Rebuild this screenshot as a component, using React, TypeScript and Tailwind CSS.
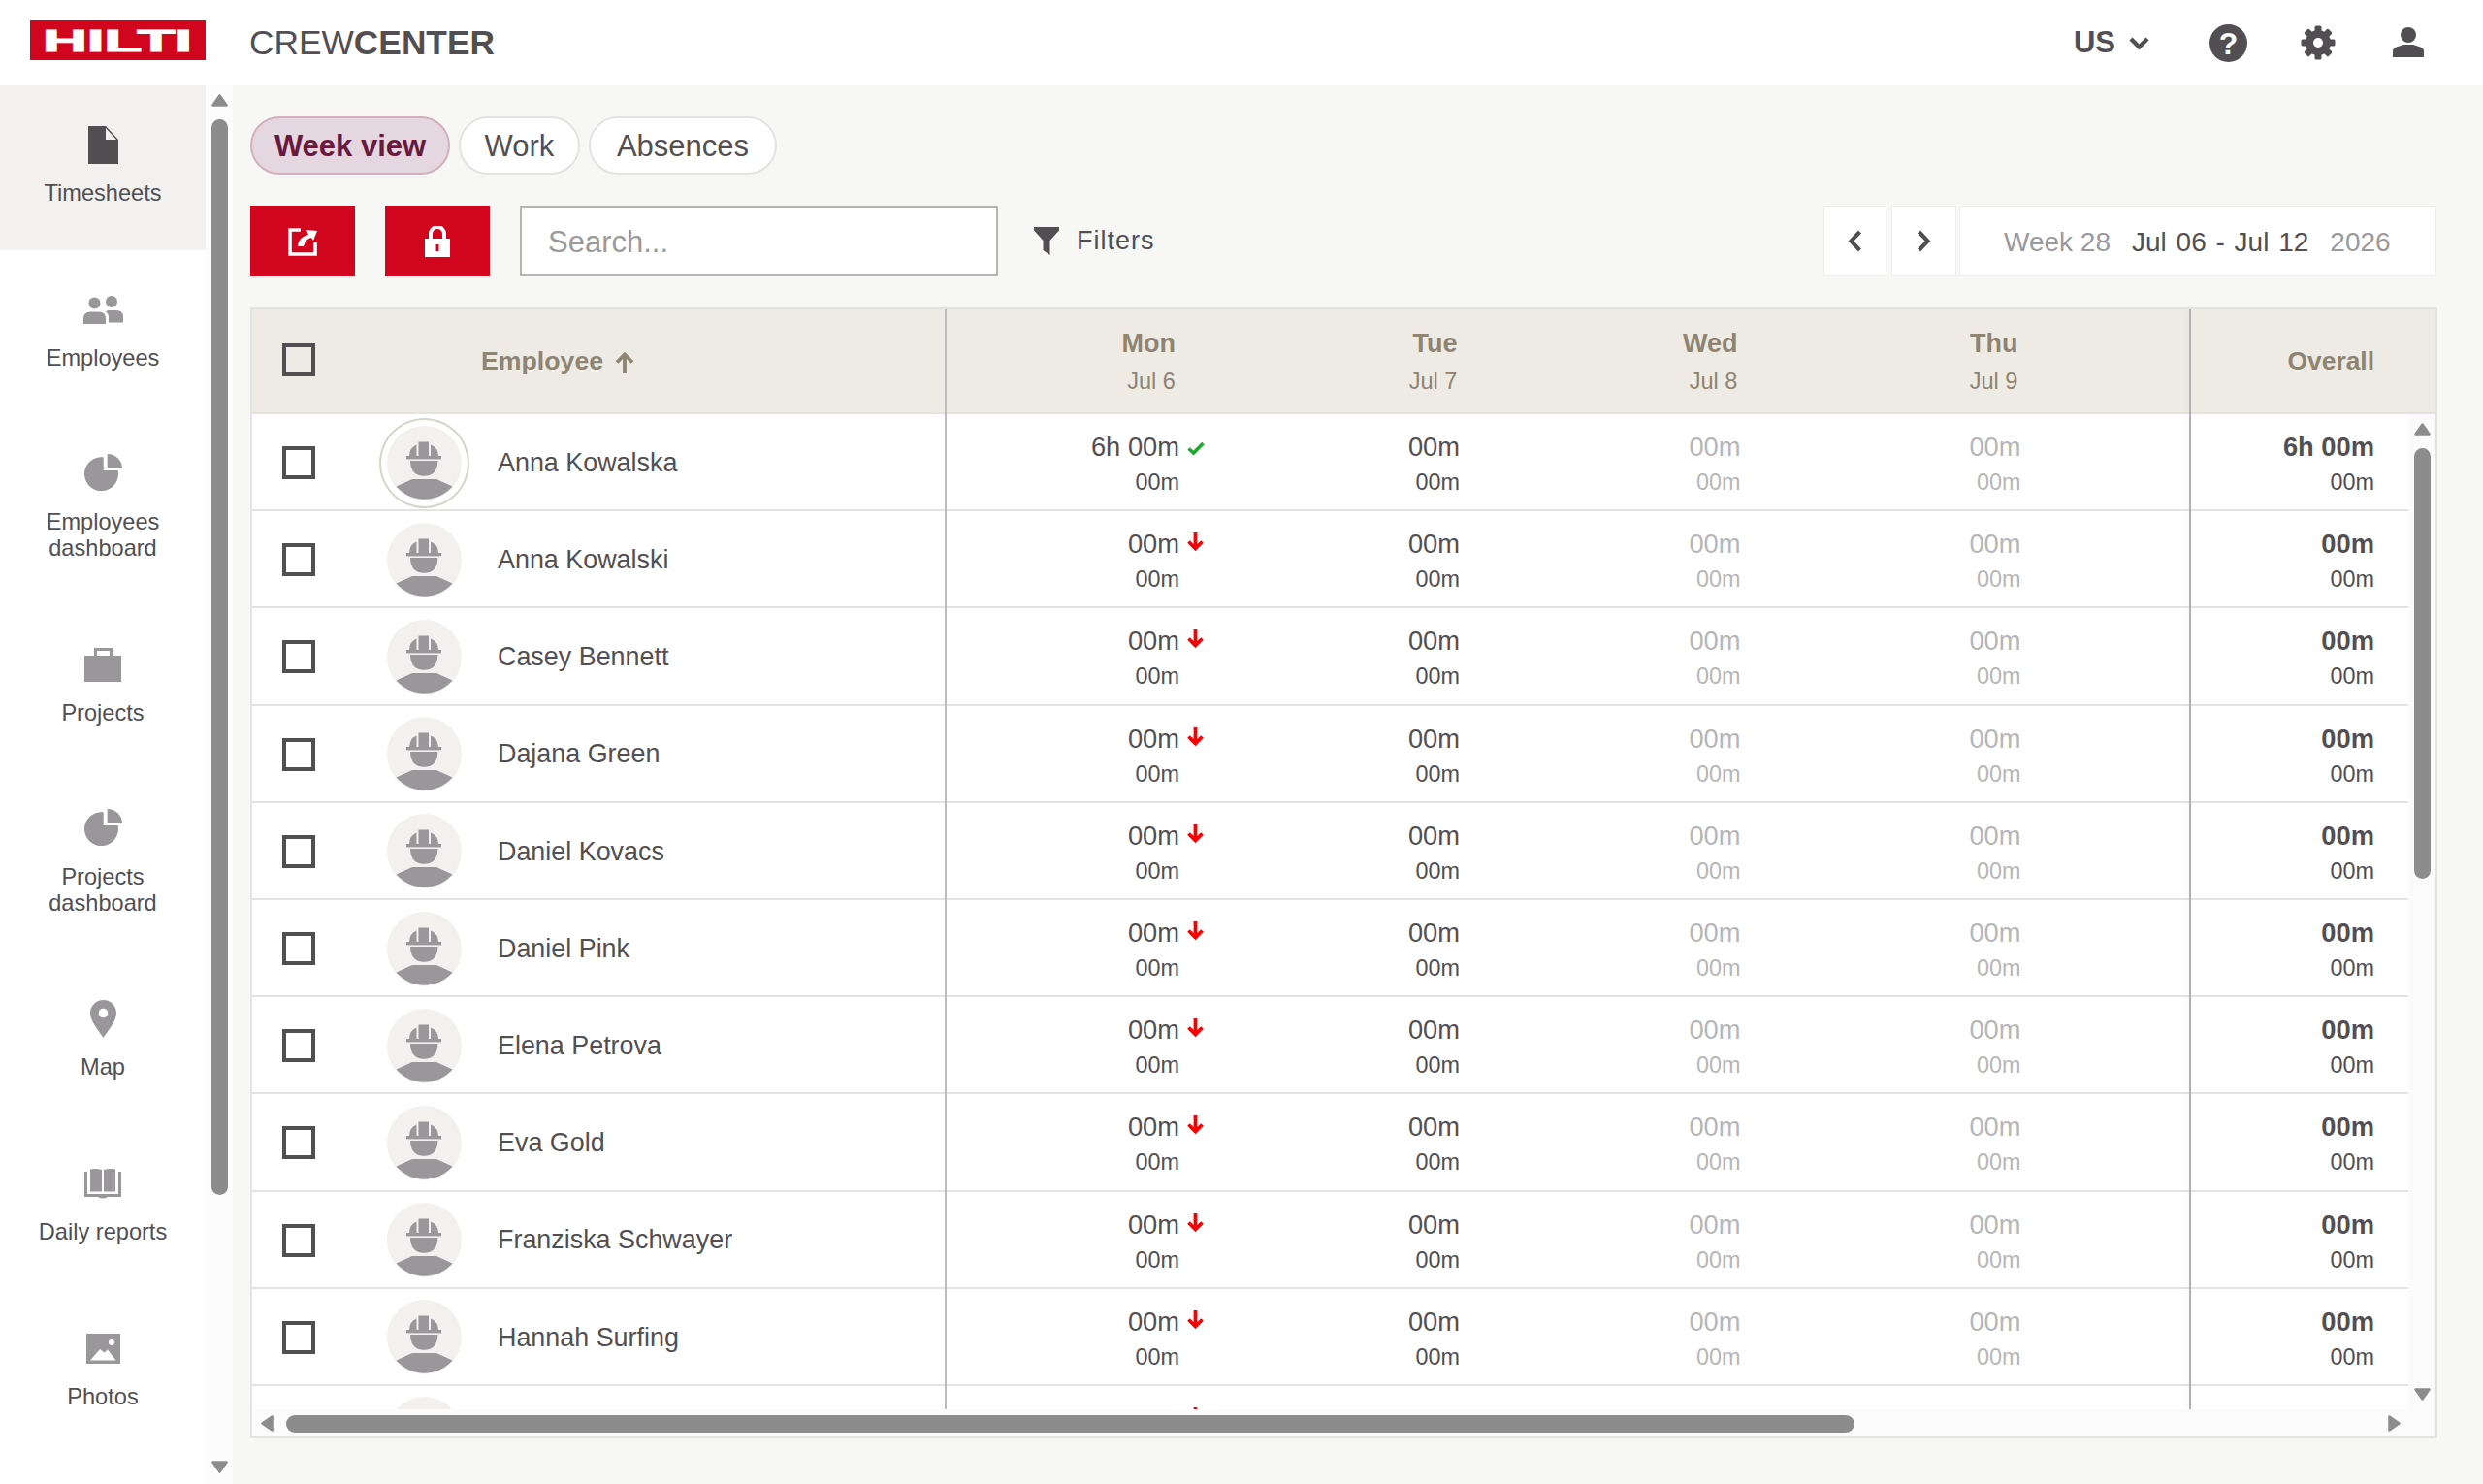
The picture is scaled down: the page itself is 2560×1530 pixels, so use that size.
import React from "react";

const DARK = "#524f53";
const GREY = "#99979a";
const SB = "#8c8c8c";

function DocIcon() {
  return (
    <svg width="31" height="39" viewBox="0 0 31 39">
      <path d="M0 0H18L31 14V39H0Z" fill={DARK} />
      <path d="M18 2L29 14H18Z" fill="#f2f1f0" />
    </svg>
  );
}
function PeopleIcon() {
  return (
    <svg width="41" height="29" viewBox="0 0 41 29" fill={GREY}>
      <circle cx="11.5" cy="7.5" r="6" />
      <circle cx="29" cy="6" r="6" />
      <path d="M0 29V23Q0 17 7 16.5H16Q23 17 23 23V29Z" />
      <path d="M25 15H34Q41 15.5 41 21V27.5H26V22Q26 18 23 16.5Z" />
    </svg>
  );
}
function PieIcon() {
  return (
    <svg className="mt-[-3px]" width="39" height="38" viewBox="0 0 39 38" fill={GREY}>
      <path d="M19.7 3.3V17H34.6A17.5 17.5 0 1 1 19.7 3.3Z" />
      <path d="M23.7 0A15.3 15.3 0 0 1 39 15H23.7Z" />
    </svg>
  );
}
function CaseIcon() {
  return (
    <svg width="38" height="35" viewBox="0 0 38 35" fill={GREY}>
      <path d="M0 8H38V35H0Z" />
      <path d="M10 8V0H29V8H26V3H13V8Z" />
    </svg>
  );
}
function PinIcon() {
  return (
    <svg width="27" height="39" viewBox="0 0 27 39">
      <path d="M13.5 0C6 0 0 6 0 13.5C0 22 9 32 13.5 39C18 32 27 22 27 13.5C27 6 21 0 13.5 0Z" fill={GREY} />
      <circle cx="13.5" cy="13.5" r="4.8" fill="#fff" />
    </svg>
  );
}
function BookIcon() {
  return (
    <svg width="38" height="32" viewBox="0 0 38 32" fill={GREY}>
      <path d="M6 0.5Q12 -0.5 18 1V23.5H6Z" />
      <path d="M20 1Q26 -0.5 32 0.5V23.5H20Z" />
      <path d="M0 3H3V26H35V3H38V29H24Q19 32 14 29H0Z" />
    </svg>
  );
}
function PhotoIcon() {
  return (
    <svg width="35" height="31" viewBox="0 0 35 31">
      <rect width="35" height="31" fill={GREY} />
      <circle cx="26" cy="9" r="3" fill="#fff" />
      <path d="M4 27.5L14 16L18.5 19.5L22 16.5L30.5 27.5Z" fill="#fff" />
    </svg>
  );
}

function ArrowUp() {
  return (
    <svg width="17" height="13" viewBox="0 0 17 13" className="shrink-0">
      <path d="M8.5 1.5L15.5 11.5H1.5Z" fill={SB} stroke={SB} strokeWidth="2.5" strokeLinejoin="round" />
    </svg>
  );
}
function ArrowDown() {
  return (
    <svg width="17" height="13" viewBox="0 0 17 13" className="shrink-0">
      <path d="M8.5 11.5L15.5 1.5H1.5Z" fill={SB} stroke={SB} strokeWidth="2.5" strokeLinejoin="round" />
    </svg>
  );
}
function ArrowLeft() {
  return (
    <svg width="13" height="17" viewBox="0 0 13 17" className="shrink-0">
      <path d="M1.5 8.5L11.5 15.5V1.5Z" fill={SB} stroke={SB} strokeWidth="2.5" strokeLinejoin="round" />
    </svg>
  );
}
function ArrowRight() {
  return (
    <svg width="13" height="17" viewBox="0 0 13 17" className="shrink-0">
      <path d="M11.5 8.5L1.5 15.5V1.5Z" fill={SB} stroke={SB} strokeWidth="2.5" strokeLinejoin="round" />
    </svg>
  );
}

function NavItem({ icon, label, active }: { icon: React.ReactNode; label: React.ReactNode; active?: boolean }) {
  return (
    <div className={`flex flex-col items-center pt-[39.5px] pb-[45.2px] ${active ? "bg-[#f2f1f0]" : ""}`}>
      <div className="flex h-[44px] items-center justify-center">{icon}</div>
      <div className="mt-[14.5px] text-center text-[23.6px] leading-[26.5px] text-[#524f53]">{label}</div>
    </div>
  );
}

function Checkbox() {
  return <div className="h-[34px] w-[34px] shrink-0 border-4 border-[#524f53] bg-transparent" />;
}

function Avatar({ ring, id }: { ring?: boolean; id: number }) {
  return (
    <div
      className={`h-[77px] w-[77px] shrink-0 rounded-full bg-[#f2f1f0] ${
        ring ? "shadow-[0_0_0_6px_#ffffff,0_0_0_8px_#d7d5cc]" : ""
      }`}
    >
      <svg width="77" height="77" viewBox="0 0 77 77" fill={GREY} data-id={id}>
        <path d="M23 31Q23.5 22 30.5 19.5V31Z" />
        <path d="M32.5 16.5H43V31H32.5Z" />
        <path d="M45 19.5Q52.5 22 53 31H45Z" />
        <rect x="20" y="31" width="36" height="3.4" />
        <path d="M24 36H52.4Q52 51.7 38.2 51.7Q24.4 51.7 24 36Z" />
        <path d="M9.5 62.5L26 55H51L67.5 62.5A38.5 38.5 0 0 1 9.5 62.5Z" />
      </svg>
    </div>
  );
}

function Cell({ main, sub, muted, badge }: { main: string; sub: string; muted?: boolean; badge?: "ok" | "down" }) {
  return (
    <div className={`flex flex-col items-end pt-[16px] ${muted ? "text-[#b7b6b7]" : "text-[#524f53]"}`}>
      <div className="relative text-[27.3px] leading-[36px]">
        {main}
        {badge === "ok" && (
          <svg className="absolute left-[100%] top-[12px] ml-[8px]" width="18" height="14" viewBox="0 0 18 14">
            <path d="M1.5 7.5L6.5 12L16.5 2" fill="none" stroke="#19ab2b" strokeWidth="3.6" />
          </svg>
        )}
        {badge === "down" && (
          <svg className="absolute left-[100%] top-[6px] ml-[8px]" width="17" height="19" viewBox="0 0 17 19">
            <path d="M8.5 0V16M1.5 9.5L8.5 16.5L15.5 9.5" fill="none" stroke="#fb0000" strokeWidth="3.8" />
          </svg>
        )}
      </div>
      <div className="text-[23.4px] leading-[36px]">{sub}</div>
    </div>
  );
}

const names = [
  "Anna Kowalska",
  "Anna Kowalski",
  "Casey Bennett",
  "Dajana Green",
  "Daniel Kovacs",
  "Daniel Pink",
  "Elena Petrova",
  "Eva Gold",
  "Franziska Schwayer",
  "Hannah Surfing",
  "Jan Novak",
];

function Row({ name, index }: { name: string; index: number }) {
  const first = index === 0;
  return (
    <div className="flex h-[100.2px] shrink-0 border-b-2 border-[#e3e3e3]">
      <div className="flex w-[716px] shrink-0 items-center pl-[31px] pt-[2px]">
        <Checkbox />
        <div className="ml-[74px]">
          <Avatar ring={first} id={index} />
        </div>
        <div className="ml-[37px] text-[26.9px] text-[#524f53]">{name}</div>
      </div>
      <div className="grid w-[1283px] shrink-0 grid-cols-[240px_289px_289.5px_289px]">
        <Cell main={first ? "6h 00m" : "00m"} sub="00m" badge={first ? "ok" : "down"} />
        <Cell main="00m" sub="00m" />
        <Cell main="00m" sub="00m" muted />
        <Cell main="00m" sub="00m" muted />
      </div>
      <div className="flex flex-1 flex-col items-end pr-[35px] pt-[16px] text-[#524f53]">
        <div className="text-[27.3px] font-bold leading-[36px]">{first ? "6h 00m" : "00m"}</div>
        <div className="text-[23.4px] leading-[36px]">00m</div>
      </div>
    </div>
  );
}

function DayHead({ day, date }: { day: string; date: string }) {
  return (
    <div className="flex flex-col items-end pt-[16px] text-[#8e8472]">
      <div className="text-[27px] font-bold leading-[38px]">{day}</div>
      <div className="mt-[1px] text-[23.6px] leading-[38px]">{date}</div>
    </div>
  );
}

function Gear() {
  const teeth = [0, 45, 90, 135, 180, 225, 270, 315];
  return (
    <svg width="36" height="36" viewBox="0 0 36 36">
      <circle cx="18" cy="18" r="13" fill={DARK} />
      {teeth.map((a) => (
        <rect key={a} x="14.5" y="0.5" width="7" height="7" rx="1.5" fill={DARK} transform={`rotate(${a} 18 18)`} />
      ))}
      <circle cx="18" cy="18" r="5" fill="#fff" />
    </svg>
  );
}

export default function App() {
  return (
    <div className="flex h-[1530px] w-[2560px] flex-col overflow-hidden bg-[#f7f7f5] font-['Liberation_Sans','Arial',sans-serif] text-[#524f53]">
      <header className="flex h-[88px] shrink-0 items-center bg-white">
        <div className="ml-[31px] mt-[-5px] h-[41px] w-[181px] bg-[#d2051e]">
          <svg width="181" height="41" viewBox="0 0 181 41">
            <text
              x="13"
              y="32"
              fontFamily="Liberation Sans"
              fontWeight="700"
              fontSize="31"
              fill="#fff"
              stroke="#fff"
              strokeWidth="1.2"
              textLength="154"
              lengthAdjust="spacingAndGlyphs"
            >
              HILTI
            </text>
          </svg>
        </div>
        <div className="ml-[45px] text-[35.3px]">
          CREW<span className="font-bold">CENTER</span>
        </div>
        <div className="ml-auto flex items-center">
          <span className="text-[31px] font-bold">US</span>
          <svg className="ml-[14px]" width="21" height="15" viewBox="0 0 21 15">
            <path d="M2 3L10.5 11.5L19 3" fill="none" stroke={DARK} strokeWidth="4.4" />
          </svg>
          <svg className="ml-[62px]" width="39" height="39" viewBox="0 0 39 39">
            <circle cx="19.5" cy="19.5" r="19.5" fill={DARK} />
            <text x="19.5" y="31" textAnchor="middle" fontFamily="Liberation Sans" fontWeight="700" fontSize="32" fill="#fff">
              ?
            </text>
          </svg>
          <div className="ml-[55px]">
            <Gear />
          </div>
          <svg className="ml-[59px] mr-[61px]" width="32" height="32" viewBox="0 0 32 32" fill={DARK}>
            <circle cx="16" cy="8" r="8" />
            <path d="M0 31V25Q0 21 5 20L11 18H21L27 20Q32 21 32 25V31Z" />
          </svg>
        </div>
      </header>

      <div className="flex min-h-0 flex-1">
        <aside className="flex w-[240px] shrink-0">
          <nav className="w-[212px] shrink-0 bg-white">
            <NavItem active icon={<DocIcon />} label="Timesheets" />
            <NavItem icon={<PeopleIcon />} label="Employees" />
            <NavItem icon={<PieIcon />} label={<>Employees<br />dashboard</>} />
            <NavItem icon={<CaseIcon />} label="Projects" />
            <NavItem icon={<PieIcon />} label={<>Projects<br />dashboard</>} />
            <NavItem icon={<PinIcon />} label="Map" />
            <NavItem icon={<BookIcon />} label="Daily reports" />
            <NavItem icon={<PhotoIcon />} label="Photos" />
          </nav>
          <div className="flex w-[28px] flex-col bg-[#fcfcfc] pb-[11px] pl-[6px] pr-[5px] pt-[9px]">
            <ArrowUp />
            <div className="mt-[13px] h-[1109px] rounded-full bg-[#8c8c8c]" />
            <div className="flex-1" />
            <ArrowDown />
          </div>
        </aside>

        <main className="min-w-0 flex-1 pl-[18px] pr-[47px] pt-[32px]">
          <div className="flex h-[60px] gap-[9px] text-[31px]">
            <div className="flex w-[206px] items-center justify-center rounded-full border-2 border-[#d3afc0] bg-[#e5d7df] pt-[2px] font-bold text-[#671a3d]">
              Week view
            </div>
            <div className="flex w-[125px] items-center justify-center rounded-full border-2 border-[#e3e3e3] bg-white pt-[2px]">
              Work
            </div>
            <div className="flex w-[194px] items-center justify-center rounded-full border-2 border-[#e3e3e3] bg-white pt-[2px]">
              Absences
            </div>
          </div>

          <div className="mt-[32px] flex h-[73px] items-stretch">
            <div className="flex w-[108px] items-center justify-center bg-[#d2051e]">
              <svg width="30" height="30" viewBox="0 0 30 30">
                <path d="M13 3H2V28H28V16" fill="none" stroke="#fff" strokeWidth="3.6" />
                <path d="M10 20Q11 10 21 8L19 3L30 4L26 14L24 11Q18 12 16 20Z" fill="#fff" />
              </svg>
            </div>
            <div className="ml-[31px] flex w-[108px] items-center justify-center bg-[#d2051e]">
              <svg width="26" height="32" viewBox="0 0 26 32">
                <path d="M6 14V8A7 7 0 0 1 20 8V14" fill="none" stroke="#fff" strokeWidth="4" />
                <path fillRule="evenodd" d="M0 13H26V32H0ZM11.5 19V26H14.5V19Z" fill="#fff" />
              </svg>
            </div>
            <div className="ml-[31px] flex w-[493px] items-center border-2 border-[#b5b5b5] bg-white pl-[27px] pt-[3px] text-[31px] text-[#9b9a9b]">
              Search...
            </div>
            <div className="ml-[37px] flex items-center">
              <svg width="26" height="29" viewBox="0 0 26 29" fill={DARK}>
                <path d="M0 0H26V3.5L16.5 14V29L9.5 24V14L0 3.5Z" />
              </svg>
              <span className="ml-[18px] text-[27px] tracking-[1px]">Filters</span>
            </div>
            <div className="ml-auto mr-[1px] flex">
              <div className="flex w-[65px] items-center justify-center border border-[#eeeeee] bg-white">
                <svg width="15" height="23" viewBox="0 0 15 23">
                  <path d="M12.5 2L3.5 11.5L12.5 21" fill="none" stroke={DARK} strokeWidth="4.2" />
                </svg>
              </div>
              <div className="ml-[5px] flex w-[67px] items-center justify-center border border-[#eeeeee] bg-white">
                <svg width="15" height="23" viewBox="0 0 15 23">
                  <path d="M2.5 2L11.5 11.5L2.5 21" fill="none" stroke={DARK} strokeWidth="4.2" />
                </svg>
              </div>
              <div className="ml-[3px] flex w-[492px] items-center gap-[22px] border border-[#eeeeee] bg-white pl-[45px] pt-[3px] text-[28px]">
                <span className="text-[#9b999c]">Week 28</span>
                <span className="[word-spacing:2px]">Jul 06 - Jul 12</span>
                <span className="text-[#9b999c]">2026</span>
              </div>
            </div>
          </div>

          <div className="mt-[32px] flex h-[1166px] flex-col border-2 border-[#e3e3e3] bg-white">
            <div className="relative flex min-h-0 flex-1 flex-col">
              <div className="flex h-[108px] shrink-0 border-b-2 border-[#e3e3e3] bg-[#eeebe5]">
                <div className="flex w-[716px] shrink-0 items-center pl-[31px] pb-[2px]">
                  <Checkbox />
                  <span className="ml-[171px] mt-[3px] text-[26.7px] font-bold text-[#8e8472]">Employee</span>
                  <svg className="ml-[12px] mt-[5px]" width="20" height="22" viewBox="0 0 20 22">
                    <path d="M10 22V3M2 10.5L10 2.5L18 10.5" fill="none" stroke="#8e8472" strokeWidth="3.8" />
                  </svg>
                </div>
                <div className="grid w-[1283px] shrink-0 grid-cols-[236px_290.5px_289px_289px]">
                  <DayHead day="Mon" date="Jul 6" />
                  <DayHead day="Tue" date="Jul 7" />
                  <DayHead day="Wed" date="Jul 8" />
                  <DayHead day="Thu" date="Jul 9" />
                </div>
                <div className="flex flex-1 items-center justify-end pr-[63px] pt-[1px] text-[26.4px] font-bold text-[#8e8472]">
                  Overall
                </div>
              </div>

              <div className="flex min-h-0 flex-1">
                <div className="min-w-0 flex-1 overflow-hidden">
                  {names.map((n, i) => (
                    <Row key={n} name={n} index={i} />
                  ))}
                </div>
                <div className="flex w-[28px] shrink-0 flex-col bg-[#fbfbfb] pb-[9px] pl-[6px] pr-[5px] pt-[9px]">
                  <ArrowUp />
                  <div className="mt-[13px] h-[444px] rounded-full bg-[#8c8c8c]" />
                  <div className="flex-1" />
                  <ArrowDown />
                </div>
              </div>

              <div className="absolute bottom-0 left-[714px] top-0 w-[2px] bg-[#bcbcbc]" />
              <div className="absolute bottom-0 left-[1997px] top-0 w-[2px] bg-[#b0b0b0] shadow-[-3px_0_5px_rgba(0,0,0,0.06)]" />
            </div>

            <div className="flex h-[28px] shrink-0 items-center bg-[#fbfbfb] pl-[9px] pr-[36px] pt-[1px]">
              <ArrowLeft />
              <div className="ml-[13px] h-[18px] w-[1617px] rounded-full bg-[#8c8c8c]" />
              <div className="flex-1" />
              <ArrowRight />
            </div>
          </div>
        </main>
      </div>
    </div>
  );
}
